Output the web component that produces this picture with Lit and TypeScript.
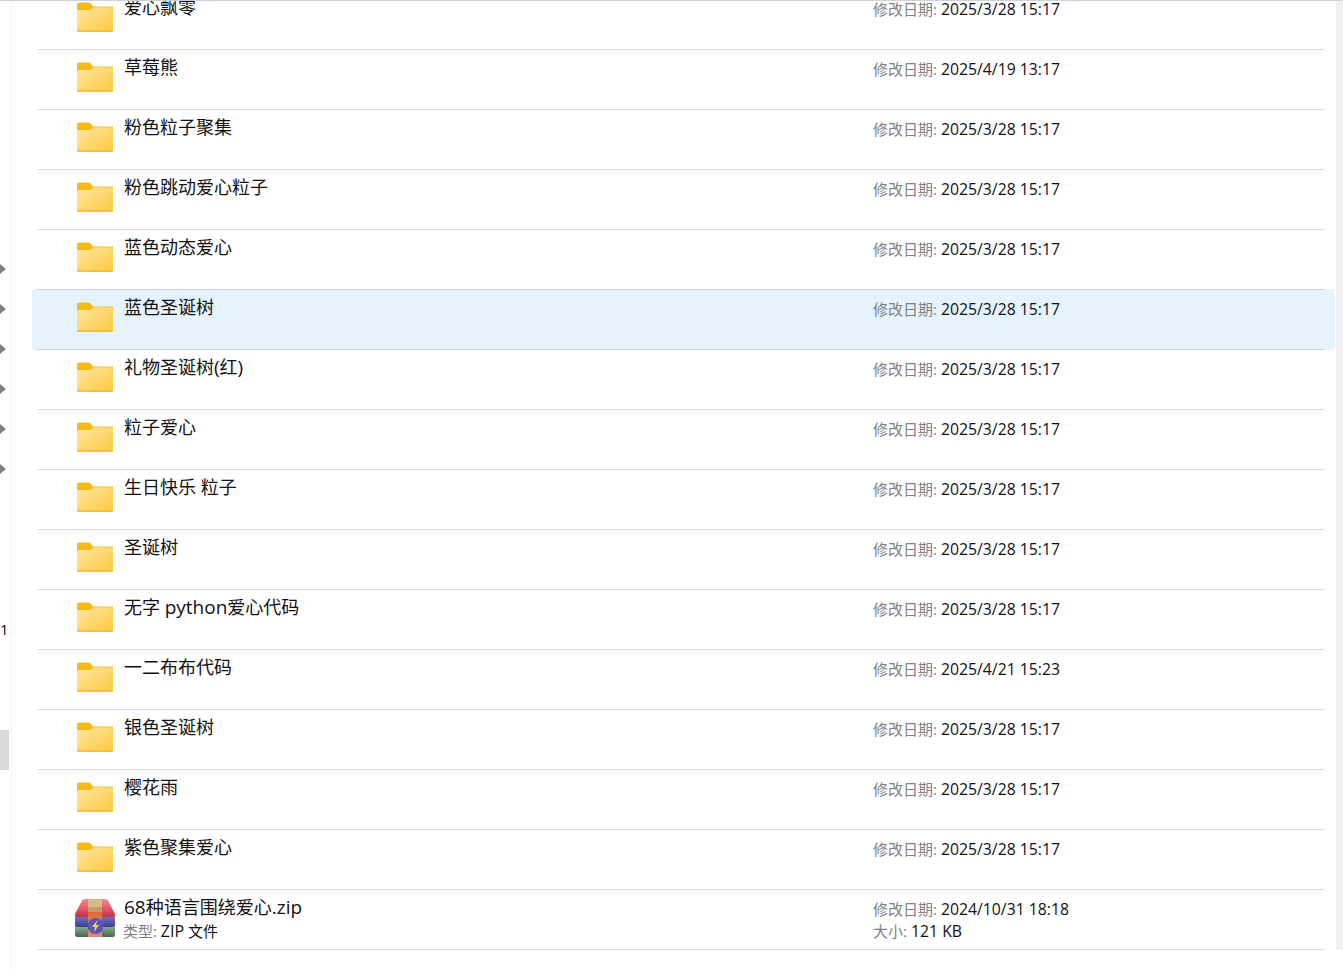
import { LitElement, html, css, svg } from "lit";
import { customElement } from "lit/decorators.js";

const rows: [string, string, boolean?][] = [
  ["爱心飘零", "2025/3/28 15:17"],
  ["草莓熊", "2025/4/19 13:17"],
  ["粉色粒子聚集", "2025/3/28 15:17"],
  ["粉色跳动爱心粒子", "2025/3/28 15:17"],
  ["蓝色动态爱心", "2025/3/28 15:17"],
  ["蓝色圣诞树", "2025/3/28 15:17", true],
  ["礼物圣诞树(红)", "2025/3/28 15:17"],
  ["粒子爱心", "2025/3/28 15:17"],
  ["生日快乐 粒子", "2025/3/28 15:17"],
  ["圣诞树", "2025/3/28 15:17"],
  ["无字 python爱心代码", "2025/3/28 15:17"],
  ["一二布布代码", "2025/4/21 15:23"],
  ["银色圣诞树", "2025/3/28 15:17"],
  ["樱花雨", "2025/3/28 15:17"],
  ["紫色聚集爱心", "2025/3/28 15:17"],
];

const folder = svg`<svg class="folder" width="36" height="30" viewBox="0 0 36 30">
  <defs><linearGradient id="fg" x1="0" y1="0" x2="1" y2="1">
    <stop offset="0" stop-color="#ffe6a0"/><stop offset="1" stop-color="#fdc93f"/></linearGradient></defs>
  <path d="M0 2.8Q0 .4 2.5 .4H11Q13 .4 14.5 2.4L16 4.6H36V10H0Z" fill="#f7b81a"/>
  <path d="M0 9Q0 8 1 8H12.5Q14.5 8 15.5 6.6L16.6 5.2H35Q36 5.2 36 6.2V28.5Q36 29.5 35 29.5H1Q0 29.5 0 28.5Z" fill="url(#fg)"/>
  <rect x="0" y="28.6" width="36" height="1.2" rx=".6" fill="#e9b23e"/>
</svg>`;

const zip = svg`<svg class="zip" width="40" height="38" viewBox="0 0 40 38">
  <defs>
    <linearGradient id="zr" x1="0" y1="0" x2="0" y2="1"><stop offset="0" stop-color="#ef8a8c"/><stop offset=".55" stop-color="#e4566a"/><stop offset="1" stop-color="#c23040"/></linearGradient>
    <linearGradient id="zb" x1="0" y1="0" x2="0" y2="1"><stop offset="0" stop-color="#6f70c4"/><stop offset="1" stop-color="#3f3f8e"/></linearGradient>
    <linearGradient id="zg" x1="0" y1="0" x2="0" y2="1"><stop offset="0" stop-color="#8cab93"/><stop offset="1" stop-color="#44664f"/></linearGradient>
    <linearGradient id="zo" x1="0" y1="0" x2="0" y2="1"><stop offset="0" stop-color="#e2662e"/><stop offset="1" stop-color="#e88a70"/></linearGradient>
  </defs>
  <path d="M0 28H40V36Q40 38 38 38H2Q0 38 0 36Z" fill="url(#zg)"/>
  <path d="M0 18H40V27Q40 28 38 28H2Q0 28 0 27Z" fill="url(#zb)"/>
  <path d="M0 15L7 1.5Q8 0 10 0H30Q32 0 33 1.5L40 15V17Q40 18 38 18H2Q0 18 0 17Z" fill="url(#zr)"/>
  <path d="M13 0H27V9H13Z" fill="#d9bb8a"/>
  <path d="M13 9H27V38H13Z" fill="url(#zo)"/>
  <rect x="13" y="8" width="14" height="5" fill="#c59a66"/>
  <circle cx="20.5" cy="27" r="8" fill="#5a55b8"/>
  <path d="M22.5 21L17 28H20.2L18.8 33L24 26H20.8Z" fill="#ffd84a"/>
</svg>`;

const label = (text: string) =>
  text.split(/([A-Za-z0-9.()]+)/).map((part, i) => (i % 2 ? html`<span class="lat">${part}</span>` : part));

@customElement("app-root")
export class AppRoot extends LitElement {
  static styles = css`
    :host {
      display: flex;
      height: 969px;
      overflow: hidden;
      background: #fff;
      font-family: "Open Sans", "Noto Sans CJK SC", "Noto Sans", sans-serif;
      color: #111;
    }
    .page { display: flex; width: 100%; height: 969px; overflow: hidden; border-top: 1px solid #c9d5dc; box-sizing: border-box; }
    .gutter {
      width: 11px;
      flex: none;
      border-right: 1px solid #f3f3f3;
      display: flex;
      flex-direction: column;
      align-items: flex-start;
      padding-top: 262px;
      box-sizing: content-box;
    }
    .chev { width: 6px; height: 12px; flex: none; margin-bottom: 28px; }
    .one { font: 15px/18px "Open Sans", sans-serif; margin-top: 117px; color: #111; }
    .thumb { width: 9px; height: 40px; background: #d9d9d9; margin-top: 92px; flex: none; }
    .list { flex: 1; margin-top: -11px; padding-left: 20px; padding-right: 1px; min-width: 0; }
    .row { height: 60px; border-radius: 3px; }
    .row.sel { background: #e5f3ff; box-shadow: 0 -1px 0 #e5f3ff; }
    .inner {
      height: 60px;
      box-sizing: border-box;
      margin: 0 11px 0 5px;
      border-bottom: 1px solid #d9d9d9;
      display: grid;
      grid-template-columns: 87px 749px 1fr;
    }
    .row.sel .inner { border-bottom-color: #c6d2e0; box-shadow: 0 -1px 0 #c6d2e0; }
    .ico { padding: 12px 0 0 40px; }
    .ico svg { display: block; }
    .name { font-size: 18px; line-height: 24px; padding-top: 5px; white-space: pre; }
    .lat { font-size: 19px; }
    .date { font-size: 15.75px; line-height: 20px; padding-top: 9px; white-space: pre; }
    .lbl { color: #808080; font-size: 15px; }
    .zipi { padding: 9px 0 0 38px; }
    .sub { font-size: 15px; line-height: 20px; margin-top: 2px; margin-left: -1px; }
    .sub .lat { font-size: 16px; }
    .sub2 { line-height: 20px; margin-top: 2px; }
    .bar { width: 7px; flex: none; height: 949px; background: #f0f0f0; }
  `;

  render() {
    return html`<div class="page">
      <div class="gutter">
        ${[0, 1, 2, 3, 4, 5].map(
          () => svg`<svg class="chev" viewBox="0 0 6 12"><path d="M0 1L6 6L0 11Z" fill="#808080"/></svg>`
        )}
        <div class="one">1</div>
        <div class="thumb"></div>
      </div>
      <div class="list">
        ${rows.map(
          ([n, d, s]) => html`<div class="row ${s ? "sel" : ""}"><div class="inner">
            <div class="ico">${folder}</div>
            <div class="name">${label(n)}</div>
            <div class="date"><span class="lbl">修改日期:</span> ${d}</div>
          </div></div>`
        )}
        <div class="row"><div class="inner">
          <div class="ico zipi">${zip}</div>
          <div class="name">${label("68种语言围绕爱心.zip")}<div class="sub"><span class="lbl">类型:</span> ${label("ZIP 文件")}</div></div>
          <div class="date"><span class="lbl">修改日期:</span> 2024/10/31 18:18<div class="sub2"><span class="lbl">大小:</span> 121 KB</div></div>
        </div></div>
      </div>
      <div class="bar"></div>
    </div>`;
  }
}
